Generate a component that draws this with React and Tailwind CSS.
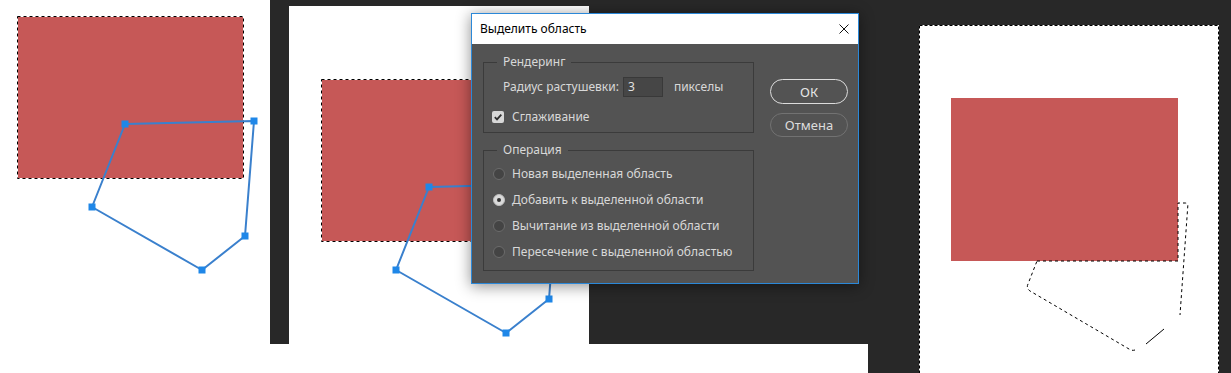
const POLY = [
  [125, 124],
  [254, 121],
  [245, 236],
  [202, 270],
  [92, 207],
];

function Shapes({ dx, dy }) {
  return (
    <g transform={`translate(${dx} ${dy})`}>
      <rect x="17" y="16" width="227" height="163" fill="#c65857" />
      <rect x="17.5" y="16.5" width="226" height="162" fill="none" stroke="#ffffff" strokeWidth="1" />
      <rect x="17.5" y="16.5" width="226" height="162" fill="none" stroke="#000000" strokeWidth="1" strokeDasharray="3 3" />
      <polygon
        points={POLY.map((p) => p.join(",")).join(" ")}
        fill="none"
        stroke="#3a80cd"
        strokeWidth="2"
        strokeLinejoin="round"
      />
      {POLY.map(([x, y], i) => (
        <rect key={i} x={x - 3.5} y={y - 3.5} width="7" height="7" fill="#1f87e8" />
      ))}
    </g>
  );
}

function Radio({ checked, label }) {
  return (
    <div className="h-[26px] flex items-center">
      {checked ? (
        <span className="w-[12px] h-[12px] rounded-full bg-[#dadada] border border-[#bdbdbd] flex items-center justify-center">
          <span className="w-[4px] h-[4px] rounded-full bg-[#333333]" />
        </span>
      ) : (
        <span className="w-[12px] h-[12px] rounded-full bg-[#444444] border border-[#6b6b6b]" />
      )}
      <span className="ml-[7px]">{label}</span>
    </div>
  );
}

function Dialog() {
  return (
    <div className="absolute left-[201px] top-[13px] w-[388px] h-[271px] border border-[#2b88d8] bg-[#535353] shadow-[0_2px_14px_rgba(0,0,0,0.45)] flex flex-col text-[12px] leading-[16px]">
      <div className="h-[30px] bg-white flex items-center justify-between pl-[8px] pr-[9px] text-black">
        <span>Выделить область</span>
        <svg width="10" height="10" viewBox="0 0 10 10">
          <path d="M0.5 0.5 L9.5 9.5 M9.5 0.5 L0.5 9.5" stroke="#111" strokeWidth="1" fill="none" />
        </svg>
      </div>
      <div className="flex-1 flex pl-[11px] pt-[18px] text-[#d8d8d8]">
        <div className="w-[271px] flex flex-col gap-[17px]">
          <div className="relative h-[71px] border border-[#3b3b3b] flex flex-col pt-[14px]">
            <span className="absolute -top-[9px] left-[13px] px-[6px] bg-[#535353]">Рендеринг</span>
            <div className="h-[20px] flex items-center pl-[19px]">
              <span>Радиус растушевки:</span>
              <span className="ml-[4px] w-[40px] h-[20px] bg-[#464646] border border-[#393939] pl-[4px] flex items-center text-[#e0e0e0]">3</span>
              <span className="ml-[11px]">пикселы</span>
            </div>
            <div className="h-[20px] mt-[10px] flex items-center pl-[8px]">
              <span className="w-[12px] h-[12px] rounded-[2px] bg-[#d8d8d8] flex items-center justify-center">
                <svg width="10" height="10" viewBox="0 0 10 10">
                  <path d="M1.8 5.2 L4 7.4 L8.3 2.6" stroke="#2f2f2f" strokeWidth="1.8" fill="none" />
                </svg>
              </span>
              <span className="ml-[8px]">Сглаживание</span>
            </div>
          </div>
          <div className="relative h-[121px] border border-[#3b3b3b] flex flex-col pt-[10px] pl-[9px]">
            <span className="absolute -top-[9px] left-[13px] px-[6px] bg-[#535353]">Операция</span>
            <Radio label="Новая выделенная область" />
            <Radio checked label="Добавить к выделенной области" />
            <Radio label="Вычитание из выделенной области" />
            <Radio label="Пересечение с выделенной областью" />
          </div>
        </div>
        <div className="ml-[16px] pt-[17px] flex flex-col gap-[9px]">
          <button className="w-[78px] h-[25px] rounded-full border border-[#dcdcdc] text-[#e6e6e6] text-[13px] flex items-center justify-center">
            ОК
          </button>
          <button className="w-[78px] h-[24px] rounded-full border border-[#727272] text-[#dcdcdc] text-[13px] flex items-center justify-center">
            Отмена
          </button>
        </div>
      </div>
    </div>
  );
}

export default function App() {
  return (
    <div className="w-[1231px] h-[373px] flex bg-white overflow-hidden font-['Noto_Sans',sans-serif]">
      <div className="w-[270px] h-full shrink-0 bg-white">
        <svg width="270" height="373">
          <Shapes dx={0} dy={0} />
        </svg>
      </div>
      <div className="w-[598px] shrink-0 flex flex-col">
        <div className="relative h-[344px] bg-[#282828] pl-[19px] pt-[6px]">
          <div className="w-[300px] h-[338px] bg-white">
            <svg width="300" height="338">
              <Shapes dx={15} dy={57} />
            </svg>
          </div>
          <Dialog />
        </div>
        <div className="flex-1 bg-white" />
      </div>
      <div className="flex-1 h-full bg-[#282828] pl-[51px] pt-[25px]">
        <div className="w-[300px] h-[348px] bg-white">
          <svg width="300" height="348">
            <rect x="32" y="73" width="227" height="163" fill="#c65857" />
            <rect x="0.5" y="0.5" width="299" height="400" fill="none" stroke="#000" strokeWidth="1" strokeDasharray="3 2" />
            <path
              d="M118 236 L259 236 L259 178 L266 178 Q269 178 268.8 181 L261 290"
              fill="none"
              stroke="#000"
              strokeWidth="1"
              strokeDasharray="3 3"
            />
            <path d="M245 304 L227 319" fill="none" stroke="#000" strokeWidth="1" />
            <path
              d="M216 325 Q213 326 210 324 L111 266 Q107 263 109 259 L118 236"
              fill="none"
              stroke="#000"
              strokeWidth="1"
              strokeDasharray="3 3"
            />
          </svg>
        </div>
      </div>
    </div>
  );
}
